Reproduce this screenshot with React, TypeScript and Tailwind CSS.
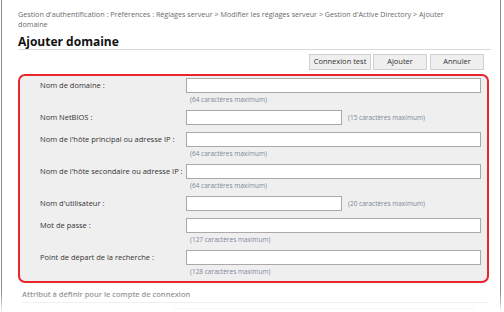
type Field = {
  label: string;
  hint: string;
  short?: boolean;
};

const fields: Field[] = [
  { label: "Nom de domaine :", hint: "(64 caractères maximum)" },
  { label: "Nom NetBIOS :", hint: "(15 caractères maximum)", short: true },
  { label: "Nom de l'hôte principal ou adresse IP :", hint: "(64 caractères maximum)" },
  { label: "Nom de l'hôte secondaire ou adresse IP :", hint: "(64 caractères maximum)" },
  { label: "Nom d'utilisateur :", hint: "(20 caractères maximum)", short: true },
  { label: "Mot de passe :", hint: "(127 caractères maximum)" },
  { label: "Point de départ de la recherche :", hint: "(128 caractères maximum)" },
];

const FieldRow = ({ field, last }: { field: Field; last: boolean }) => {
  if (field.short) {
    return (
      <div className="flex items-center pb-[7px]">
        <span className="w-[146px] shrink-0 text-[#333]">{field.label}</span>
        <div className="h-[15px] w-[156px] border border-[#a9a9a9] bg-white" />
        <span className="ml-[6px] text-[6.5px] text-[#7d8799]">{field.hint}</span>
      </div>
    );
  }
  return (
    <div className={last ? "pb-[3px]" : "pb-[4px]"}>
      <div className="flex items-center">
        <span className="w-[146px] shrink-0 text-[#333]">{field.label}</span>
        <div className="h-[15px] flex-1 border border-[#a9a9a9] bg-white" />
      </div>
      <div className="ml-[150px] mt-[1px] h-[12px] text-[6.5px] leading-[12px] text-[#7d8799]">
        {field.hint}
      </div>
    </div>
  );
};

export default function App() {
  return (
    <div
      className="relative h-[312px] w-[504px] overflow-hidden bg-white"
      style={{ fontFamily: '"Open Sans", "Noto Sans", sans-serif' }}
    >
      <div className="ml-[1px] h-full w-[500px] border-x border-[#8a8a8a] pl-[16px] pr-[9px]">
        <p className="pr-[20px] pt-[9px] text-[7.2px] leading-[10px] text-[#6b6b6b]">
          Gestion d'authentification : Préférences : Réglages serveur &gt; Modifier les réglages
          serveur &gt; Gestion d'Active Directory &gt; Ajouter domaine
        </p>

        <h1 className="mt-[5px] border-b border-[#d9d9d9] text-[12px] font-bold leading-[15px] text-[#111]">
          Ajouter domaine
        </h1>

        <div className="mt-[4px] flex justify-end gap-[2px] pr-[7px] text-[7.5px] text-[#333]">
          <button className="h-[16px] w-[62px] border border-[#d0d0d0] bg-[#efefef]">
            Connexion test
          </button>
          <button className="h-[16px] w-[54px] border border-[#d0d0d0] bg-[#efefef]">
            Ajouter
          </button>
          <button className="ml-[1px] h-[16px] w-[54px] border border-[#d0d0d0] bg-[#efefef]">
            Annuler
          </button>
        </div>

        <div className="mt-[4px] mr-[2px] rounded-[7px] border-2 border-[#e8262b] bg-[#efefef] pl-[20px] pr-[6px] pt-[2px] text-[7.5px]">
          {fields.map((f, i) => (
            <FieldRow key={f.label} field={f} last={i === fields.length - 1} />
          ))}
        </div>

        <div className="mx-[4px] mt-[6px] border-b border-[#e4e4e4] pb-[2px] text-[7.5px] font-semibold text-[#7f7f7f]">
          Attribut à définir pour le compte de connexion
        </div>
        <div className="ml-[156px] mt-[5px] h-[12px] w-[300px] border border-[#e0e0e0] bg-white" />
      </div>

      <div className="pointer-events-none absolute bottom-0 left-0 h-[22px] w-full bg-gradient-to-b from-white/0 via-white/40 to-white/95" />
    </div>
  );
}
